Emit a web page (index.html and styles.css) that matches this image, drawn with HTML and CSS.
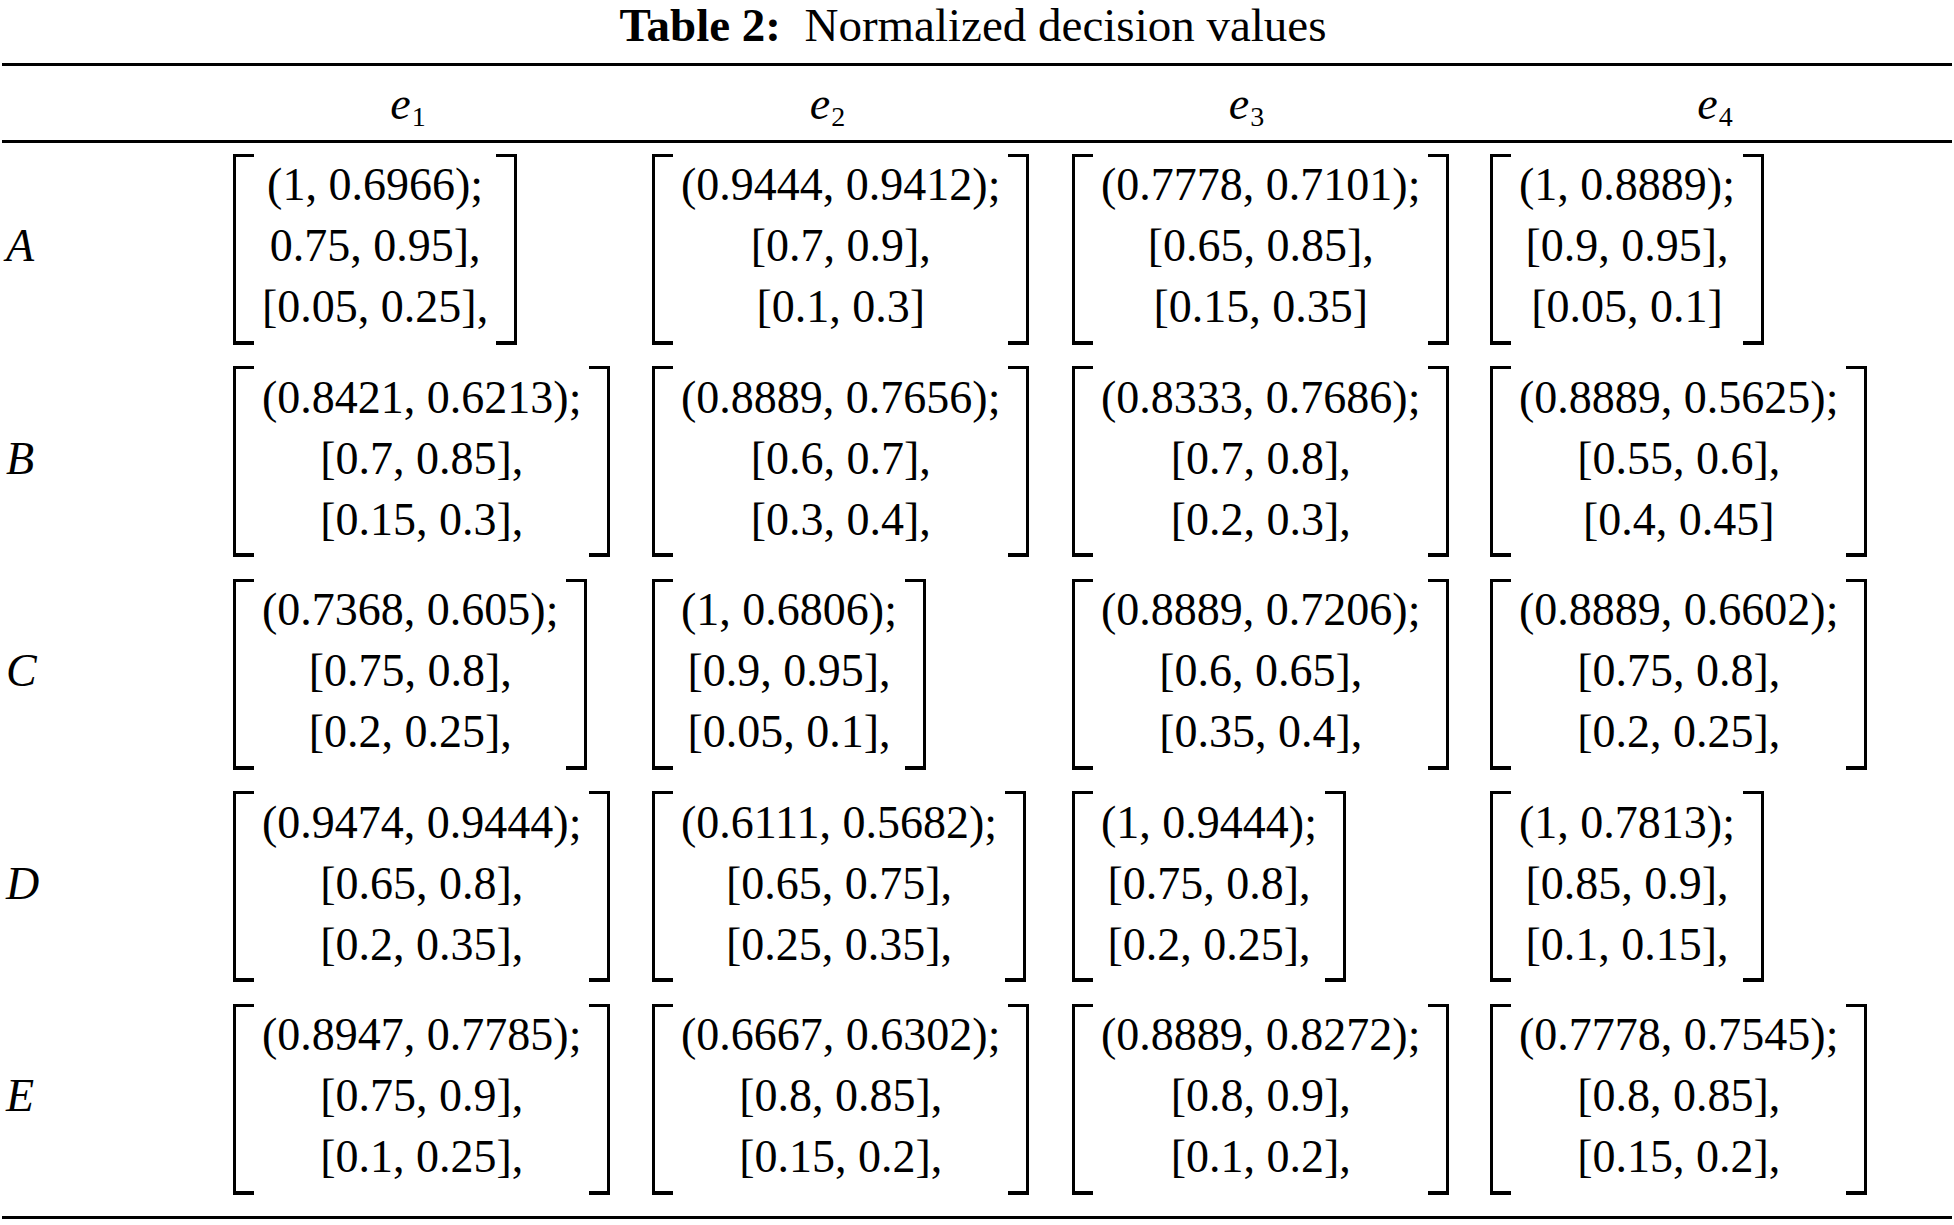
FILE: index.html
```html
<!DOCTYPE html>
<html lang="en">
<head>
<meta charset="utf-8">
<title>Table 2: Normalized decision values</title>
<link rel="stylesheet" href="styles.css">
</head>
<body>
<div class="page">
  <div class="caption"><b>Table 2:</b>&nbsp; Normalized decision values</div>
  <div class="table">
    <div class="row head">
      <div class="label"></div>
      <div class="hcell"><i>e</i><sub>1</sub></div>
      <div class="hcell"><i>e</i><sub>2</sub></div>
      <div class="hcell"><i>e</i><sub>3</sub></div>
      <div class="hcell last"><i>e</i><sub>4</sub></div>
    </div>
    <div class="body">
      <div class="row">
        <div class="label">A</div>
        <div class="cell"><div class="matrix"><span class="br l"></span><div class="lines"><div>(1, 0.6966);</div><div>0.75, 0.95],</div><div>[0.05, 0.25],</div></div><span class="br r"></span></div></div>
        <div class="cell"><div class="matrix"><span class="br l"></span><div class="lines"><div>(0.9444, 0.9412);</div><div>[0.7, 0.9],</div><div>[0.1, 0.3]</div></div><span class="br r"></span></div></div>
        <div class="cell"><div class="matrix"><span class="br l"></span><div class="lines"><div>(0.7778, 0.7101);</div><div>[0.65, 0.85],</div><div>[0.15, 0.35]</div></div><span class="br r"></span></div></div>
        <div class="cell"><div class="matrix"><span class="br l"></span><div class="lines"><div>(1, 0.8889);</div><div>[0.9, 0.95],</div><div>[0.05, 0.1]</div></div><span class="br r"></span></div></div>
      </div>
      <div class="row">
        <div class="label">B</div>
        <div class="cell"><div class="matrix"><span class="br l"></span><div class="lines"><div>(0.8421, 0.6213);</div><div>[0.7, 0.85],</div><div>[0.15, 0.3],</div></div><span class="br r"></span></div></div>
        <div class="cell"><div class="matrix"><span class="br l"></span><div class="lines"><div>(0.8889, 0.7656);</div><div>[0.6, 0.7],</div><div>[0.3, 0.4],</div></div><span class="br r"></span></div></div>
        <div class="cell"><div class="matrix"><span class="br l"></span><div class="lines"><div>(0.8333, 0.7686);</div><div>[0.7, 0.8],</div><div>[0.2, 0.3],</div></div><span class="br r"></span></div></div>
        <div class="cell"><div class="matrix"><span class="br l"></span><div class="lines"><div>(0.8889, 0.5625);</div><div>[0.55, 0.6],</div><div>[0.4, 0.45]</div></div><span class="br r"></span></div></div>
      </div>
      <div class="row">
        <div class="label">C</div>
        <div class="cell"><div class="matrix"><span class="br l"></span><div class="lines"><div>(0.7368, 0.605);</div><div>[0.75, 0.8],</div><div>[0.2, 0.25],</div></div><span class="br r"></span></div></div>
        <div class="cell"><div class="matrix"><span class="br l"></span><div class="lines"><div>(1, 0.6806);</div><div>[0.9, 0.95],</div><div>[0.05, 0.1],</div></div><span class="br r"></span></div></div>
        <div class="cell"><div class="matrix"><span class="br l"></span><div class="lines"><div>(0.8889, 0.7206);</div><div>[0.6, 0.65],</div><div>[0.35, 0.4],</div></div><span class="br r"></span></div></div>
        <div class="cell"><div class="matrix"><span class="br l"></span><div class="lines"><div>(0.8889, 0.6602);</div><div>[0.75, 0.8],</div><div>[0.2, 0.25],</div></div><span class="br r"></span></div></div>
      </div>
      <div class="row">
        <div class="label">D</div>
        <div class="cell"><div class="matrix"><span class="br l"></span><div class="lines"><div>(0.9474, 0.9444);</div><div>[0.65, 0.8],</div><div>[0.2, 0.35],</div></div><span class="br r"></span></div></div>
        <div class="cell"><div class="matrix"><span class="br l"></span><div class="lines"><div>(0.6111, 0.5682);</div><div>[0.65, 0.75],</div><div>[0.25, 0.35],</div></div><span class="br r"></span></div></div>
        <div class="cell"><div class="matrix"><span class="br l"></span><div class="lines"><div>(1, 0.9444);</div><div>[0.75, 0.8],</div><div>[0.2, 0.25],</div></div><span class="br r"></span></div></div>
        <div class="cell"><div class="matrix"><span class="br l"></span><div class="lines"><div>(1, 0.7813);</div><div>[0.85, 0.9],</div><div>[0.1, 0.15],</div></div><span class="br r"></span></div></div>
      </div>
      <div class="row">
        <div class="label">E</div>
        <div class="cell"><div class="matrix"><span class="br l"></span><div class="lines"><div>(0.8947, 0.7785);</div><div>[0.75, 0.9],</div><div>[0.1, 0.25],</div></div><span class="br r"></span></div></div>
        <div class="cell"><div class="matrix"><span class="br l"></span><div class="lines"><div>(0.6667, 0.6302);</div><div>[0.8, 0.85],</div><div>[0.15, 0.2],</div></div><span class="br r"></span></div></div>
        <div class="cell"><div class="matrix"><span class="br l"></span><div class="lines"><div>(0.8889, 0.8272);</div><div>[0.8, 0.9],</div><div>[0.1, 0.2],</div></div><span class="br r"></span></div></div>
        <div class="cell"><div class="matrix"><span class="br l"></span><div class="lines"><div>(0.7778, 0.7545);</div><div>[0.8, 0.85],</div><div>[0.15, 0.2],</div></div><span class="br r"></span></div></div>
      </div>
    </div>
  </div>
</div>
</body>
</html>
```

FILE: styles.css
```css
html, body {
  margin: 0;
  padding: 0;
  background: #ffffff;
}

body {
  font-family: "Liberation Serif", "Times New Roman", serif;
  font-size: 46px;
  color: #000000;
}

.page {
  width: 1950px;
  margin: 0 2px;
}

.caption {
  text-align: center;
  line-height: 51px;
  margin: 0 0 12px 0;
  white-space: pre;
  padding-right: 8px;
  font-size: 47px;
}

.caption b {
  font-weight: bold;
}

.table {
  border-top: 3px solid #000;
  border-bottom: 3px solid #000;
}

.row {
  display: grid;
  grid-template-columns: 231px 419px 420px 418px 1fr;
  align-items: center;
}

.head {
  padding: 9.5px 0;
  border-bottom: 3px solid #000;
  line-height: 55px;
}

.hcell {
  text-align: center;
  padding-right: 69px;
  white-space: nowrap;
}

.hcell.last {
  padding-right: 12px;
}

.hcell sub {
  font-size: 28px;
  line-height: 0;
  vertical-align: -7px;
  margin-left: 1px;
}

.body {
  padding-bottom: 10px;
}

.body .row {
  padding: 10.75px 0;
}

.label {
  font-style: italic;
  line-height: 61px;
  padding-left: 4px;
  padding-bottom: 7px;
}

.cell {
  justify-self: start;
}

.matrix {
  display: flex;
  align-items: stretch;
  height: 191px;
}

.br {
  width: 21px;
  box-sizing: border-box;
  border-top: 3px solid #000;
  border-bottom: 4px solid #000;
}

.br.l {
  border-left: 3px solid #000;
}

.br.r {
  border-right: 3px solid #000;
}

.lines {
  display: flex;
  flex-direction: column;
  justify-content: center;
  padding: 0 8px 7px 8px;
  line-height: 61px;
  text-align: center;
  white-space: nowrap;
}
```
